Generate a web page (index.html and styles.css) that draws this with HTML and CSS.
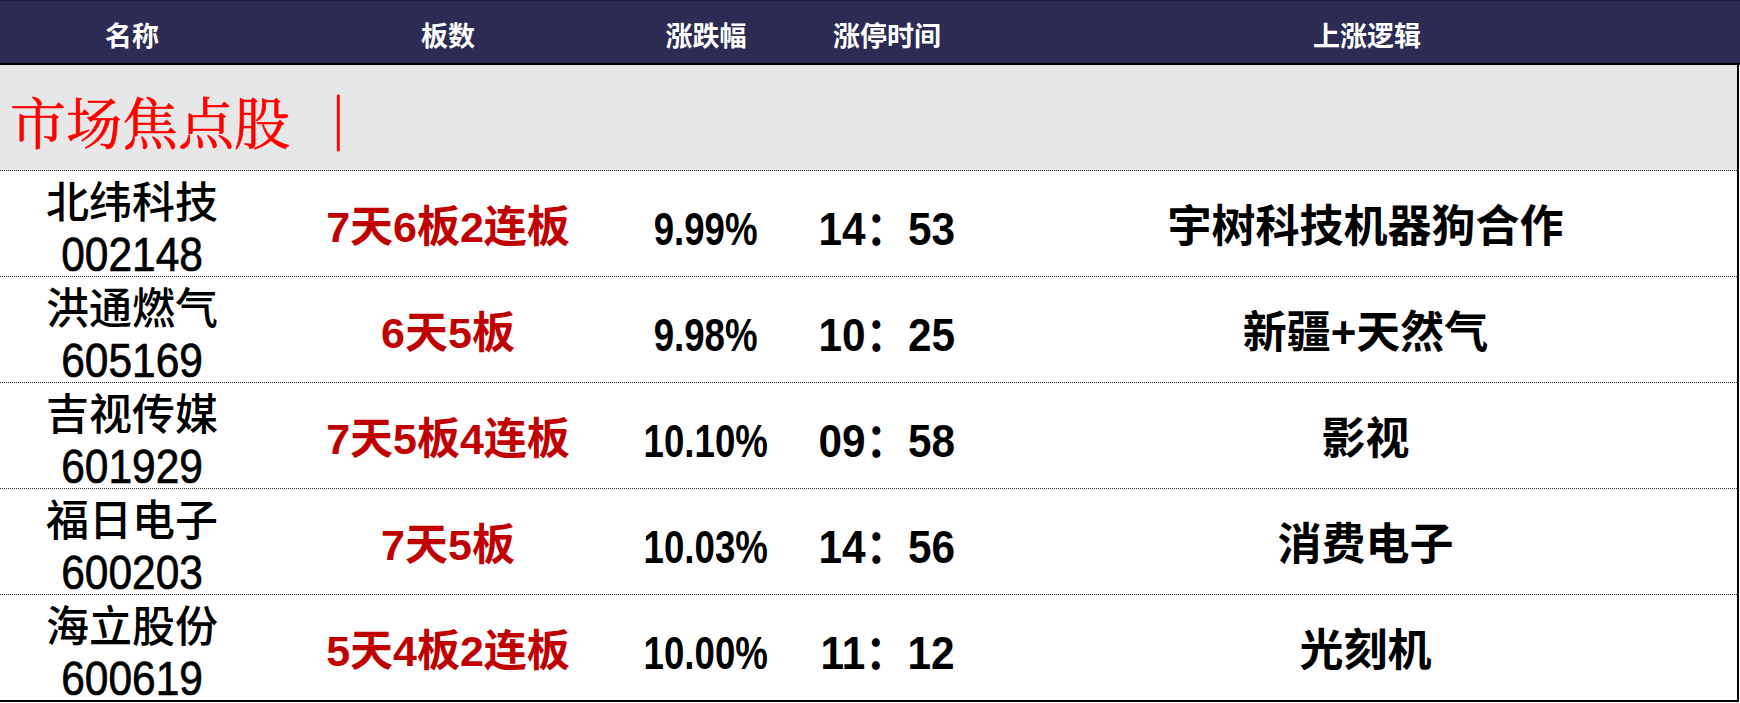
FILE: index.html
```html
<!DOCTYPE html>
<html lang="zh-CN">
<head>
<meta charset="utf-8">
<title>市场焦点股</title>
<link rel="stylesheet" href="styles.css">
</head>
<body>
<div class="sheet">
  <div class="head grid">
    <div class="hc">名称</div>
    <div class="hc">板数</div>
    <div class="hc">涨跌幅</div>
    <div class="hc">涨停时间</div>
    <div class="hc">上涨逻辑</div>
  </div>
  <div class="body">
    <div class="band"><span class="band-title">市场焦点股 ｜</span></div>
    <div class="row grid">
      <div class="cell name"><span class="cn">北纬科技</span><span class="code">002148</span></div>
      <div class="cell board">7天6板2连板</div>
      <div class="cell pct"><span class="narrow">9.99%</span></div>
      <div class="cell time"><span class="tnarrow">14：53</span></div>
      <div class="cell logic">宇树科技机器狗合作</div>
    </div>
    <div class="row grid">
      <div class="cell name"><span class="cn">洪通燃气</span><span class="code">605169</span></div>
      <div class="cell board">6天5板</div>
      <div class="cell pct"><span class="narrow">9.98%</span></div>
      <div class="cell time"><span class="tnarrow">10：25</span></div>
      <div class="cell logic">新疆+天然气</div>
    </div>
    <div class="row grid">
      <div class="cell name"><span class="cn">吉视传媒</span><span class="code">601929</span></div>
      <div class="cell board">7天5板4连板</div>
      <div class="cell pct"><span class="narrow">10.10%</span></div>
      <div class="cell time"><span class="tnarrow">09：58</span></div>
      <div class="cell logic">影视</div>
    </div>
    <div class="row grid">
      <div class="cell name"><span class="cn">福日电子</span><span class="code">600203</span></div>
      <div class="cell board">7天5板</div>
      <div class="cell pct"><span class="narrow">10.03%</span></div>
      <div class="cell time"><span class="tnarrow">14：56</span></div>
      <div class="cell logic">消费电子</div>
    </div>
    <div class="row grid last">
      <div class="cell name"><span class="cn">海立股份</span><span class="code">600619</span></div>
      <div class="cell board">5天4板2连板</div>
      <div class="cell pct"><span class="narrow">10.00%</span></div>
      <div class="cell time"><span class="tnarrow">11：12</span></div>
      <div class="cell logic">光刻机</div>
    </div>
  </div>
</div>
</body>
</html>
```

FILE: styles.css
```css
html, body {
  margin: 0;
  padding: 0;
  background: #ffffff;
}

body {
  font-family: "Liberation Sans", "Noto Sans CJK SC", sans-serif;
  color: #000000;
}

.sheet {
  width: 1740px;
}

.grid {
  display: grid;
  grid-template-columns: 264px 368px 148px 214px 1fr;
}

.head {
  height: 62px;
  background: #2b2b53;
  border-top: 1px solid #1c1c38;
  border-bottom: 2px solid #000000;
}

.hc {
  display: flex;
  align-items: center;
  justify-content: center;
  padding-top: 5px;
  color: #ffffff;
  font-weight: bold;
  font-size: 27px;
  font-family: "Liberation Sans", "Noto Sans CJK SC", sans-serif;
}

.body {
  width: 1739px;
  box-sizing: border-box;
  border-right: 2px solid #000000;
}

.band {
  background: #e7e7e7;
  border-bottom: 1px dotted #222222;
  display: flex;
  align-items: center;
  padding-left: 10px;
  padding-top: 4px;
  box-sizing: border-box;
  height: 106px;
}

.band-title {
  color: #ff0000;
  font-size: 56px;
  font-family: "Noto Serif CJK SC", "Source Han Serif SC", "Liberation Serif", serif;
  line-height: 1;
  word-spacing: 6px;
  -webkit-text-stroke: 0.6px #ff0000;
}

.row {
  height: 106px;
  box-sizing: border-box;
  border-bottom: 1px dotted #222222;
}

.row.last {
  height: 107px;
  border-bottom: 2px solid #000000;
}

.cell {
  display: flex;
  align-items: center;
  justify-content: center;
  text-align: center;
  padding-top: 2px;
  box-sizing: border-box;
  font-size: 43px;
  line-height: 52px;
  white-space: nowrap;
}

.name {
  flex-direction: column;
  padding-top: 6px;
}

.cn {
  display: block;
  font-size: 43px;
  line-height: 52px;
  font-weight: 500;
}

.code {
  display: block;
  font-size: 48px;
  line-height: 52px;
  transform: scaleX(0.885);
  -webkit-text-stroke: 0.7px #000000;
}

.board {
  color: #c00000;
  font-weight: bold;
}

.pct {
  font-weight: bold;
  padding-top: 6px;
}

.narrow {
  display: inline-block;
  font-size: 47px;
  transform: scaleX(0.78);
}

.time {
  font-weight: bold;
  padding-top: 6px;
}

.tnarrow {
  display: inline-block;
  font-size: 47px;
  transform: scaleX(0.9);
}

.logic {
  font-weight: bold;
  font-size: 44px;
}
```
